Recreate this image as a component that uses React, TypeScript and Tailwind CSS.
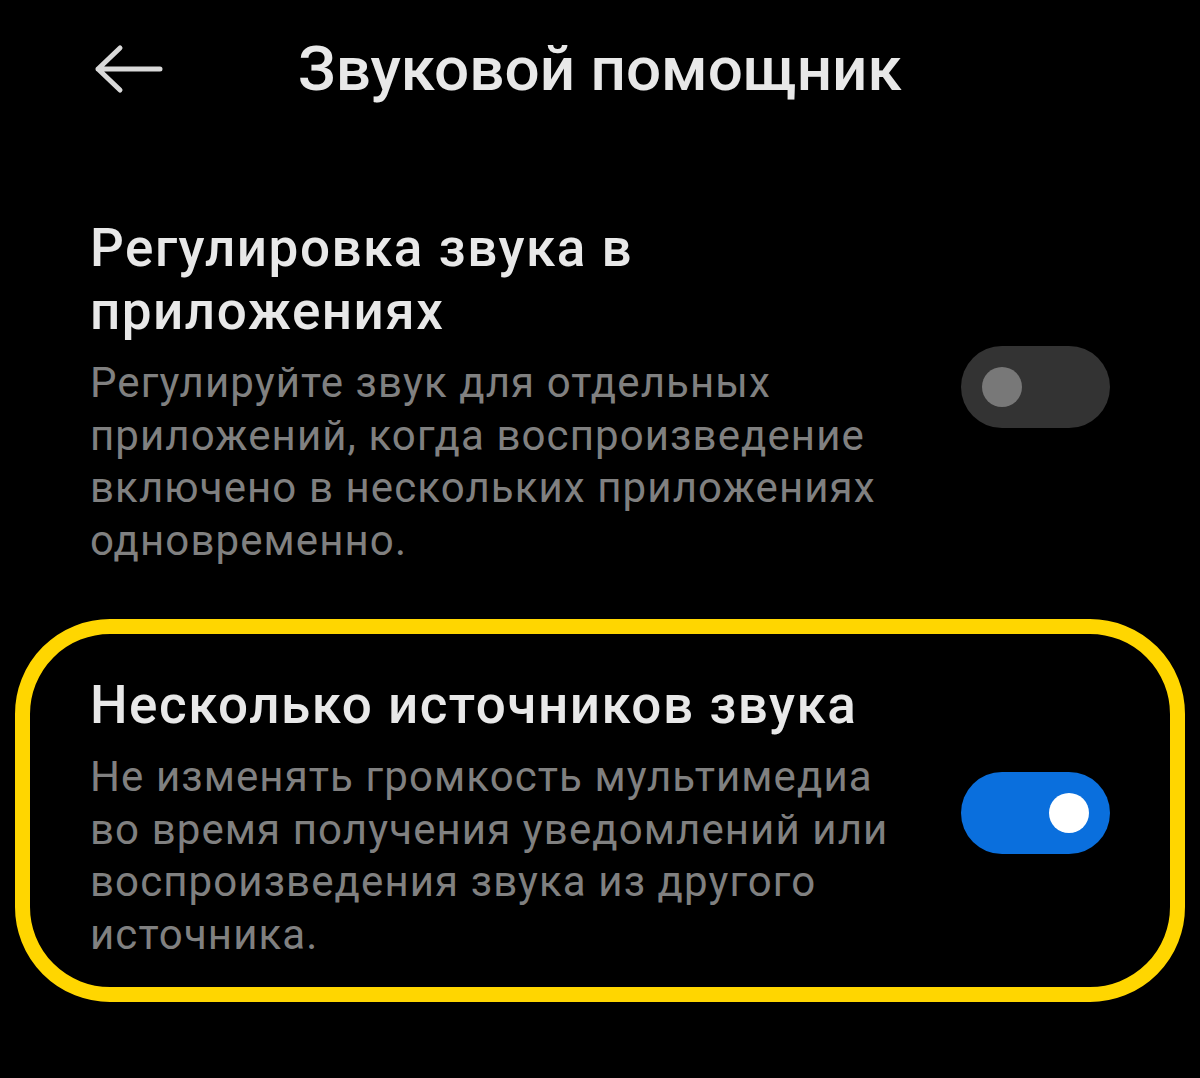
import { useState } from "react";

interface SettingProps {
  title: string;
  desc: string;
  checked: boolean;
  onToggle: () => void;
}

function Toggle({ checked, onToggle }: { checked: boolean; onToggle: () => void }) {
  return (
    <button
      onClick={onToggle}
      className={`relative mb-[10px] h-[82px] w-[149px] shrink-0 rounded-full ${checked ? "bg-[#0a6fdd]" : "bg-[#333333]"}`}
    >
      <span
        className={`absolute top-1/2 h-[40px] w-[40px] -translate-y-1/2 rounded-full ${
          checked ? "right-[21px] bg-white" : "left-[21px] bg-[#787878]"
        }`}
      />
    </button>
  );
}

function SettingRow({ title, desc, checked, onToggle }: SettingProps) {
  return (
    <div className="flex items-center gap-[31px]">
      <div className="flex-1">
        <div className="text-[53px] font-medium leading-[63px] tracking-[1.5px] text-[#e8e8e8]">{title}</div>
        <div className="mt-[14px] text-[42px] leading-[52.5px] tracking-[1.1px] text-[#808080]">{desc}</div>
      </div>
      <Toggle checked={checked} onToggle={onToggle} />
    </div>
  );
}

export default function App() {
  const [perApp, setPerApp] = useState(false);
  const [multiSource, setMultiSource] = useState(true);

  return (
    <div className="min-h-[1078px] w-full bg-black font-['Roboto','Noto_Sans',sans-serif]">
      <header className="flex h-[138px] items-center pl-[94px]">
        <svg width="70" height="50" viewBox="0 0 70 50" fill="none" className="shrink-0">
          <path
            d="M4 25H66M26 4L4 25L26 46"
            stroke="#d9d9d9"
            strokeWidth="5"
            strokeLinecap="round"
            strokeLinejoin="round"
          />
        </svg>
        <h1 className="ml-[134px] text-[62px] font-medium leading-none text-[#e8e8e8]">Звуковой помощник</h1>
      </header>

      <section className="px-[90px] pt-[79px]">
        <SettingRow
          title="Регулировка звука в приложениях"
          desc="Регулируйте звук для отдельных приложений, когда воспроизведение включено в нескольких приложениях одновременно."
          checked={perApp}
          onToggle={() => setPerApp(!perApp)}
        />
      </section>

      <section className="mx-[15px] mt-[52px] rounded-[95px] border-[15px] border-[#ffd600] px-[60px] pb-[26px] pt-[40px]">
        <SettingRow
          title="Несколько источников звука"
          desc="Не изменять громкость мультимедиа во время получения уведомлений или воспроизведения звука из другого источника."
          checked={multiSource}
          onToggle={() => setMultiSource(!multiSource)}
        />
      </section>
    </div>
  );
}
